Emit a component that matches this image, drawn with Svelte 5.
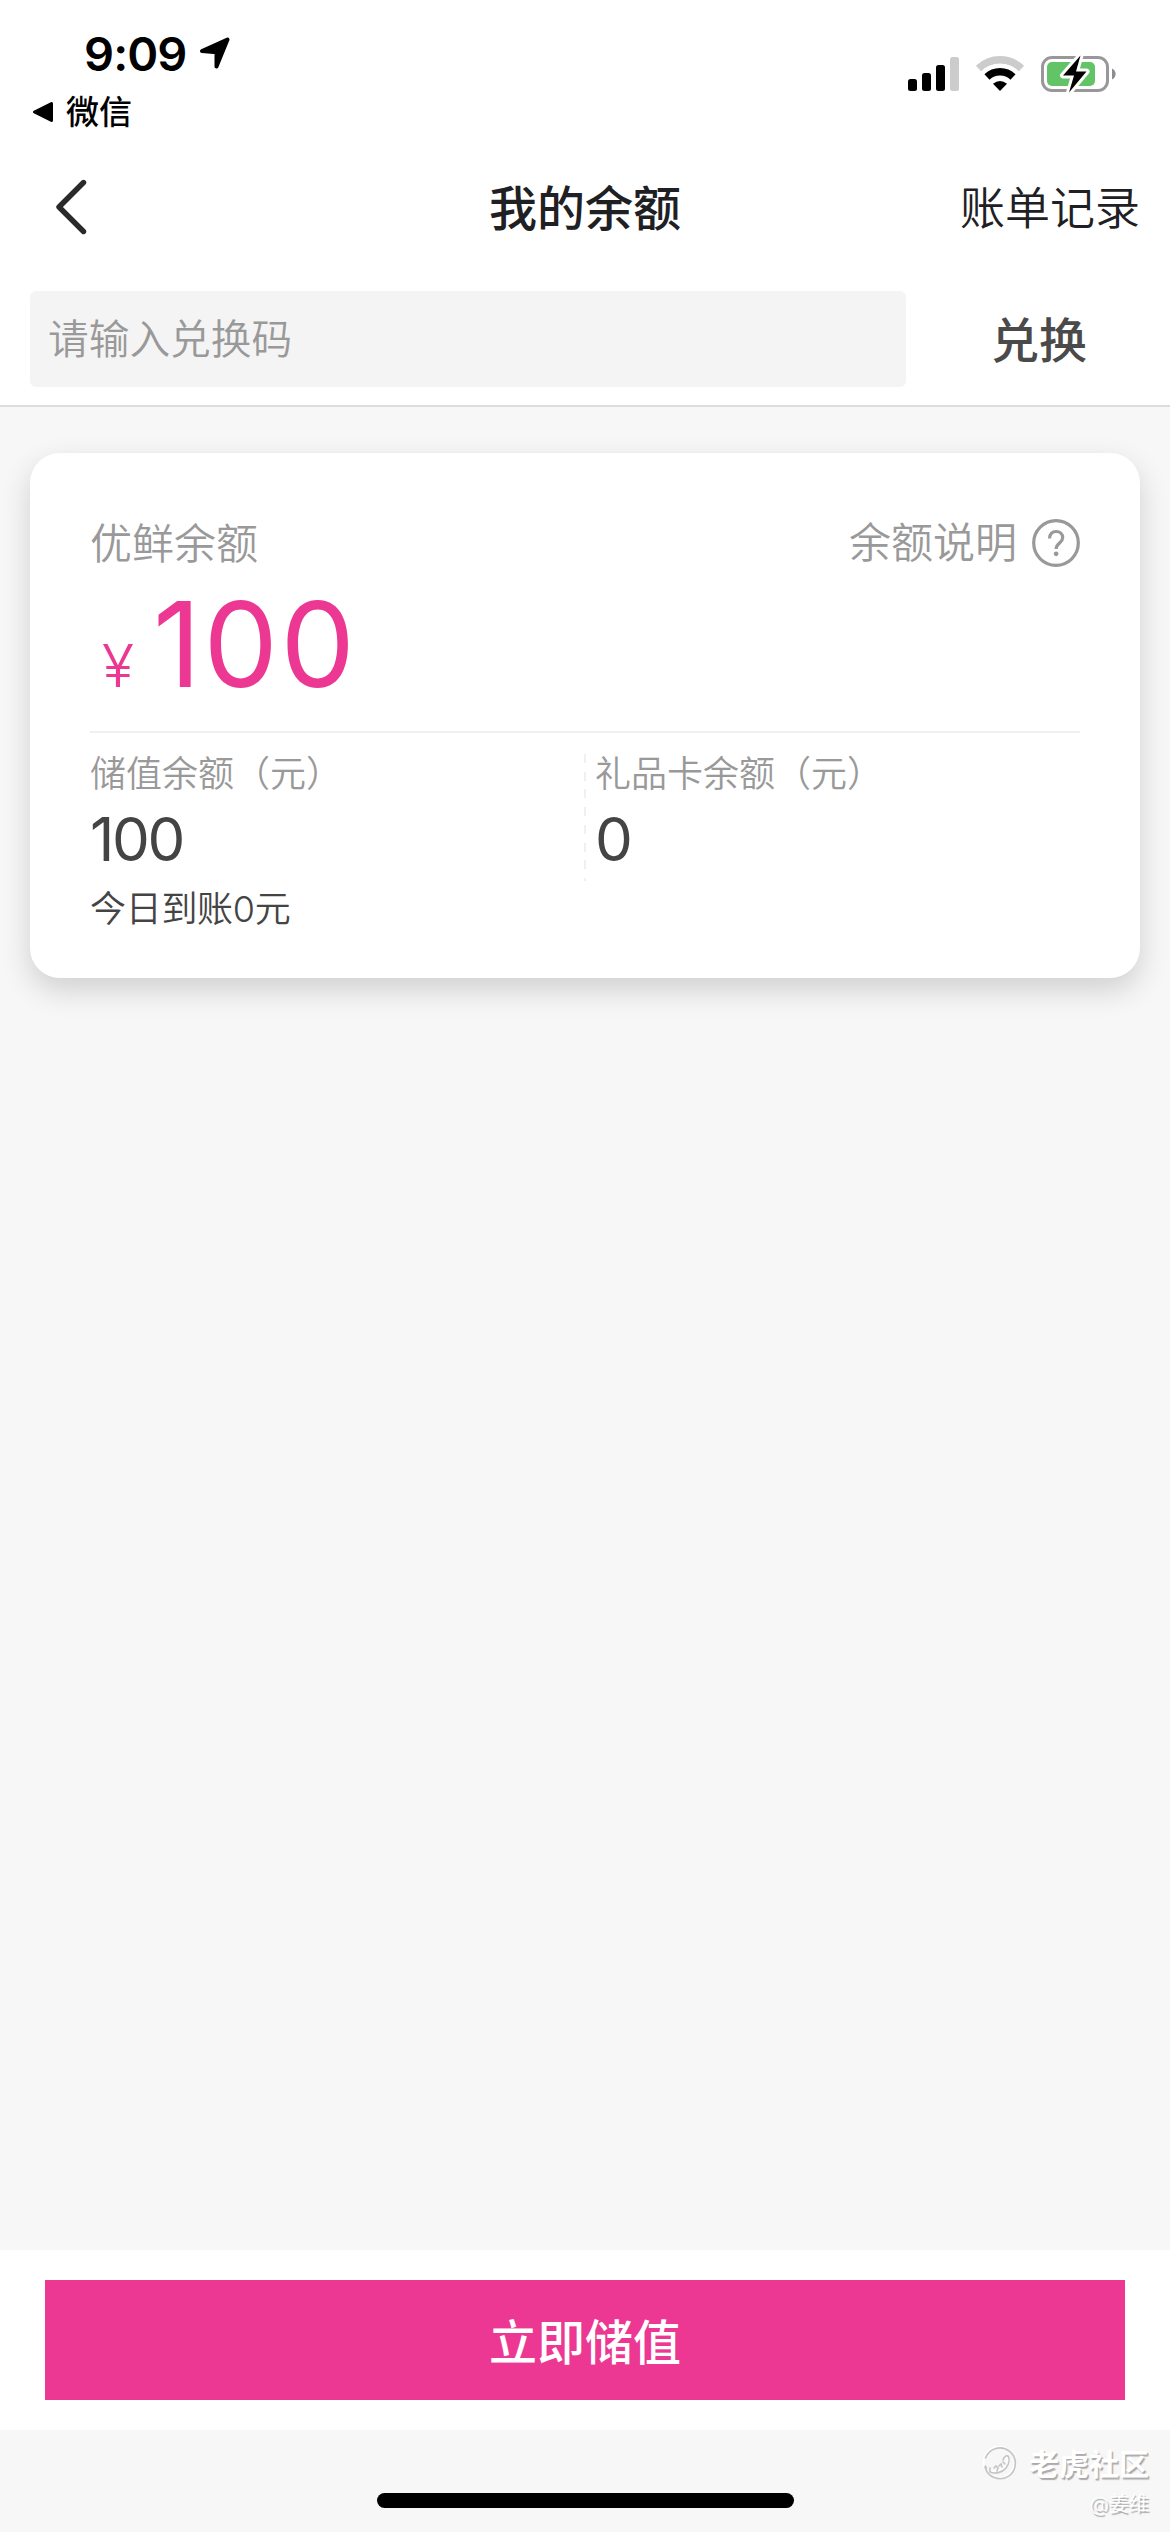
<script lang="ts">
  type Account = { label: string; amount: number; note?: string };

  const signalBars = [
    { x: 0, height: 12 },
    { x: 14, height: 18 },
    { x: 28, height: 26 },
    { x: 42, height: 34 }
  ];

  const accounts: Account[] = [
    { label: '储值余额（元）', amount: 100, note: '今日到账0元' },
    { label: '礼品卡余额（元）', amount: 0 }
  ];

  let code = $state('');
  let total = $derived(accounts.reduce((sum, account) => sum + account.amount, 0));
</script>

<div class="page">
  <div class="status">
    <div class="status__left">
      <div class="status__clock">
        <span class="status__time">9:09</span>
        <svg class="status__location" width="32" height="32" viewBox="0 0 32 32">
          <path
            d="M3 14 28.5 2.5 17.5 29.5V15.2z"
            fill="#000"
            stroke="#000"
            stroke-width="4"
            stroke-linejoin="round"
          />
        </svg>
      </div>
      <div class="status__back">
        <svg width="22" height="22" viewBox="0 0 22 22">
          <path d="M2.5 11 19.5 2.5v17z" fill="#000" stroke="#000" stroke-width="3" stroke-linejoin="round" />
        </svg>
        <span>微信</span>
      </div>
    </div>
    <div class="status__right">
      <svg width="51" height="38" viewBox="0 0 51 38">
        {#each signalBars as bar, i (bar.x)}
          <rect x={bar.x} y={36 - bar.height} width="9" height={bar.height} rx="2.5" fill={i < 3 ? '#000' : '#ccc'} />
        {/each}
      </svg>
      <svg width="50" height="38" viewBox="0 0 50 38">
        <path d="M3.5 13.5a31 31 0 0 1 43 0" fill="none" stroke="#ccc" stroke-width="7.5" />
        <path d="M12 22a19 19 0 0 1 26 0" fill="none" stroke="#000" stroke-width="7.5" />
        <path d="M25 36 18 28.7q7-5.4 14 0z" fill="#000" />
      </svg>
      <svg width="76" height="42" viewBox="0 0 76 42">
        <rect x="1.5" y="4.5" width="65" height="33" rx="9.5" fill="#fff" stroke="#9a979b" stroke-width="3" />
        <rect x="6" y="9" width="48" height="24" rx="5" fill="#62c466" />
        <path d="M71 15.5a6 6 0 0 1 0 11z" fill="#8e8c90" />
        <path
          d="M39.5 2.5 22 22.5h11L28 39.5 45.5 18.5H35z"
          fill="#000"
          stroke="#fff"
          stroke-width="6"
          stroke-linejoin="round"
          paint-order="stroke"
        />
      </svg>
    </div>
  </div>

  <header class="nav">
    <button class="nav__back" aria-label="返回">
      <svg width="32" height="58" viewBox="0 0 32 58">
        <path
          d="M28.5 4.5 4 29l24.5 24.5"
          fill="none"
          stroke="#2a2a2a"
          stroke-width="5.4"
          stroke-linecap="round"
          stroke-linejoin="round"
        />
      </svg>
    </button>
    <h1 class="nav__title">我的余额</h1>
    <button class="nav__bills">账单记录</button>
  </header>

  <div class="redeem">
    <input class="redeem__input" placeholder="请输入兑换码" bind:value={code} />
    <button class="redeem__submit">兑换</button>
  </div>

  <main class="content">
    <section class="card">
      <div class="card__head">
        <span>优鲜余额</span>
        <span class="card__help">
          余额说明
          <svg width="48" height="48" viewBox="0 0 48 48" fill="none" stroke="#999">
            <circle cx="24" cy="24" r="22.3" stroke-width="3.2" />
            <path d="M17.5 19.5c0-4.2 2.8-7 6.6-7s6.6 2.6 6.6 6.3c0 5-6.6 5.5-6.6 11.2" stroke-width="3.2" />
            <circle cx="24.1" cy="34.8" r="2.4" fill="#999" stroke="none" />
          </svg>
        </span>
      </div>
      <div class="card__total">
        <span class="card__currency">¥</span>
        <span class="card__sum">{total}</span>
      </div>
      <div class="card__accounts">
        {#each accounts as account (account.label)}
          <div class="account">
            <span class="account__label">{account.label}</span>
            <span class="account__amount">{account.amount}</span>
            {#if account.note}
              <span class="account__note">{account.note}</span>
            {/if}
          </div>
        {/each}
      </div>
    </section>
  </main>

  <div class="action">
    <button class="action__button">立即储值</button>
  </div>

  <footer class="bottom">
    <div class="bottom__indicator"></div>
    <div class="watermark">
      <div class="watermark__brand">
        <svg width="34" height="34" viewBox="0 0 34 34" fill="none">
          <g stroke="#fff" stroke-width="1.6" transform="translate(-1 -1)">
            <circle cx="17" cy="17" r="15.5" />
            <path d="M8 25c9 3 19-3 17-14" />
          </g>
          <g stroke="#c4c4c7" stroke-width="1.6" stroke-linecap="round">
            <path d="M2.5 12A15.4 15.4 0 1 1 2 21" />
            <path d="M7 22v4c5 2 12 1 16-4 3-4 4-9 2-12-2-1-4 1-5 4" />
            <path d="M11 22l2-2 2 2-1 3M16 20l2-2 1 3M20 16l2 2M2.5 20l1 2" />
          </g>
        </svg>
        <span>老虎社区</span>
      </div>
      <span class="watermark__user">@姜维</span>
    </div>
  </footer>
</div>

<style>
  :global(body) {
    background: #f7f7f7;
  }

  .page {
    display: flex;
    flex-direction: column;
    width: 1170px;
    height: 2532px;
    overflow: hidden;
    background: #f7f7f7;
    font-family: Inter, 'Noto Sans CJK SC', sans-serif;
    font-weight: 350;
    color: #444;
  }

  button,
  input {
    border: none;
    background: none;
    padding: 0;
    font-family: inherit;
    font-weight: inherit;
    color: inherit;
  }

  svg {
    display: block;
    flex: none;
  }

  .status {
    display: flex;
    justify-content: space-between;
    height: 141px;
    background: #fff;
    color: #000;
  }

  .status__left {
    padding: 30px 0 0 32px;
  }

  .status__clock {
    display: flex;
    align-items: center;
    height: 48px;
    padding-left: 52px;
    gap: 12px;
  }

  .status__time {
    font-size: 47px;
    font-weight: 600;
    line-height: 48px;
    letter-spacing: -0.9px;
  }

  .status__location {
    margin-bottom: 2px;
  }

  .status__back {
    display: flex;
    align-items: center;
    gap: 12px;
    height: 46px;
    margin-top: 11px;
    font-size: 33px;
    font-weight: 500;
    line-height: 46px;
  }

  .status__right {
    display: flex;
    align-items: flex-start;
    gap: 16px;
    padding: 55px 53px 0 0;
  }

  .status__right svg:last-child {
    margin-top: -2px;
  }

  .nav {
    display: grid;
    grid-template-columns: 1fr auto 1fr;
    align-items: center;
    height: 132px;
    padding: 0 30px 0 55px;
    background: #fff;
    color: #1f2023;
  }

  .nav__back {
    justify-self: start;
  }

  .nav__title {
    margin: 3px 0 0 -25px;
    font-size: 48px;
    font-weight: 500;
    line-height: 66px;
  }

  .nav__bills {
    justify-self: end;
    margin-top: 3px;
    font-size: 45px;
    line-height: 66px;
  }

  .redeem {
    display: flex;
    align-items: center;
    height: 132px;
    padding: 0 0 0 30px;
    border-bottom: 2px solid #dcdcdc;
    background: #fff;
  }

  .redeem__input {
    box-sizing: border-box;
    width: 876px;
    height: 96px;
    padding: 0 18px;
    border-radius: 6px;
    background: #f4f4f4;
    font-size: 40.7px;
  }

  .redeem__input::placeholder {
    color: #999;
    opacity: 1;
  }

  .redeem__submit {
    flex: 1;
    margin: 3px 0 0 2px;
    font-size: 48px;
    font-weight: 500;
    line-height: 66px;
    color: #4a4a4a;
  }

  .content {
    flex: 1;
    padding: 46px 30px 0;
  }

  .card {
    box-sizing: border-box;
    height: 525px;
    padding: 60px 60px 0;
    border-radius: 30px;
    background: #fff;
    box-shadow: 0 12px 30px rgb(0 0 0 / 16%);
  }

  .card__head {
    display: flex;
    justify-content: space-between;
    font-size: 42px;
    line-height: 62px;
    height: 60px;
    color: #999;
  }

  .card__help {
    display: flex;
    align-items: center;
    gap: 15px;
  }

  .card__total {
    display: flex;
    align-items: baseline;
    height: 158px;
    border-bottom: 2px solid #f0f0f0;
    font-weight: 400;
    line-height: 143px;
    color: #ec3892;
  }

  .card__currency {
    width: 51px;
    margin-left: 12px;
    font-size: 59px;
    font-weight: 350;
  }

  .card__sum {
    font-size: 118px;
    letter-spacing: 2.5px;
  }

  .card__accounts {
    display: grid;
    grid-template-columns: 505px 1fr;
    padding-top: 20px;
  }

  .account {
    position: relative;
    display: flex;
    flex-direction: column;
  }

  /* Dashed rule between neighbouring accounts */
  .account + .account::before {
    content: '';
    position: absolute;
    top: 1px;
    left: -11px;
    width: 2px;
    height: 127px;
    background: repeating-linear-gradient(#f0f0f0 0 9px, transparent 9px 17.7px);
  }

  .account__label {
    font-size: 36px;
    line-height: 42px;
    color: #999;
  }

  .account__amount {
    margin-top: 12px;
    font-size: 60px;
    font-weight: 400;
    line-height: 64px;
    letter-spacing: -2.4px;
  }

  .account__note {
    margin-top: 17px;
    font-size: 36px;
    line-height: 42px;
    letter-spacing: -0.3px;
  }

  .action {
    padding: 30px 45px;
    background: #fff;
  }

  .action__button {
    display: block;
    width: 100%;
    height: 120px;
    padding-bottom: 2px;
    background: #ec3892;
    font-size: 48px;
    font-weight: 500;
    color: #fff;
  }

  .bottom {
    position: relative;
    display: flex;
    align-items: flex-end;
    justify-content: center;
    height: 102px;
  }

  .bottom__indicator {
    width: 417px;
    height: 15px;
    margin-bottom: 24px;
    border-radius: 8px;
    background: #000;
  }

  .watermark {
    position: absolute;
    top: 13px;
    right: 21px;
    display: flex;
    flex-direction: column;
    align-items: flex-end;
    color: #fff;
    text-shadow: 1.5px 1.5px 1px #aaaaad;
  }

  .watermark__brand {
    display: flex;
    align-items: center;
    gap: 12px;
    height: 40px;
    font-size: 30px;
    font-weight: 700;
  }

  .watermark__brand span {
    margin-top: -3px;
  }

  .watermark__user {
    font-size: 20px;
    line-height: 43px;
  }
</style>
